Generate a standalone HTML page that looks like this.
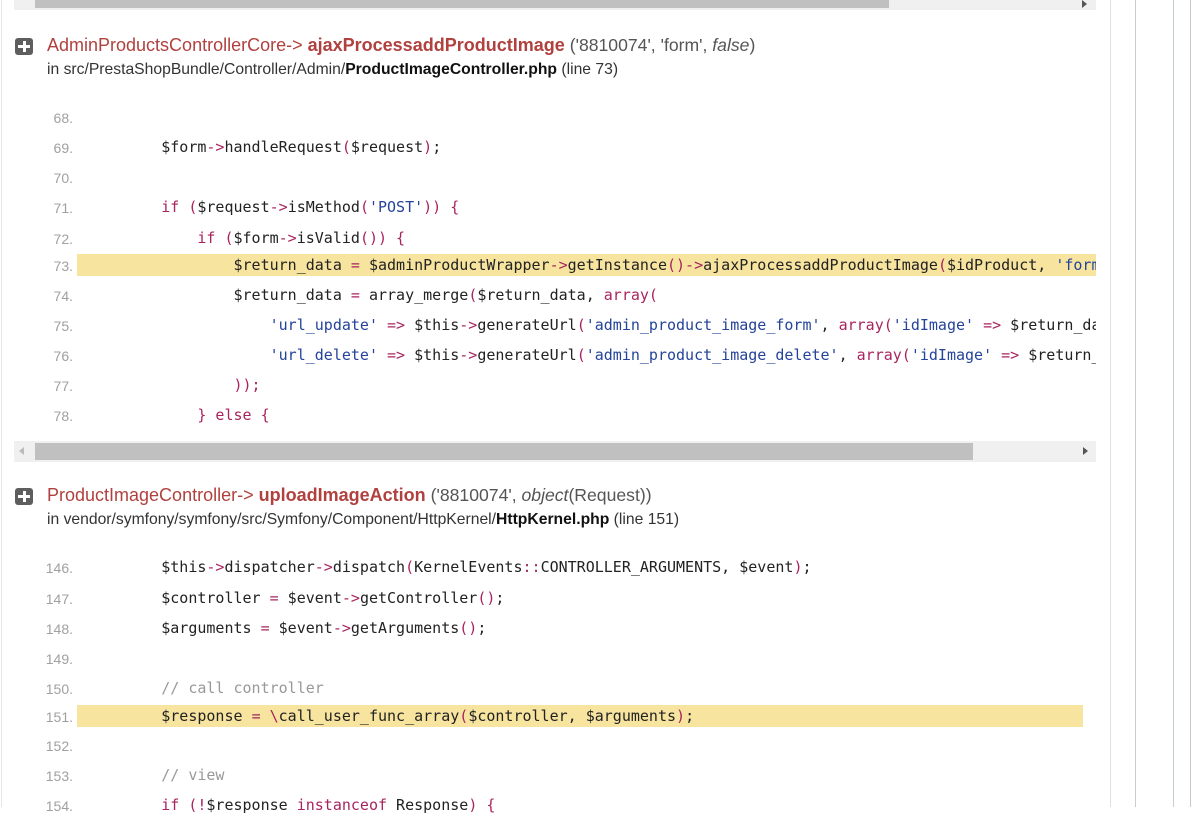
<!DOCTYPE html>
<html><head><meta charset="utf-8"><style>
body{margin:0;width:1202px;height:807px;overflow:hidden;background:#fff;position:relative;font-family:"Liberation Sans",Arial,sans-serif}
.a{position:absolute}
.ln{position:absolute;left:0;width:73px;text-align:right;font:14px "Liberation Sans",sans-serif;color:#a0a0a0;height:22px;line-height:24px}
.cd{position:absolute;left:77px;width:1019px;padding-left:12px;box-sizing:border-box;font:15px "DejaVu Sans Mono",monospace;color:#222;white-space:pre;height:22px;line-height:23px;overflow:hidden}
.hl{background:#f7e49f}
.k{color:#a8245f}.s{color:#24439a}.c{color:#999}
.t{position:absolute;left:47px;font-size:18px;color:#b0413e;white-space:nowrap}
.t b{font-weight:bold}
.t .g{color:#555;font-size:17.6px}
.p{position:absolute;left:47px;font-size:15.7px;color:#333;white-space:nowrap}
.ic{position:absolute;left:15px;width:18px;height:17px;background:#5e5e5e;border-radius:3px}
.ic:before{content:"";position:absolute;left:3px;top:7px;width:12px;height:3px;background:#fff}
.ic:after{content:"";position:absolute;left:7.5px;top:3px;width:3px;height:11px;background:#fff}
</style></head><body>
<div class="a" style="left:1px;top:0;width:1px;height:807px;background:#e6e6e6"></div>
<div class="a" style="left:1110px;top:0;width:1px;height:807px;background:#e0e0e0"></div>
<div class="a" style="left:1135px;top:0;width:1px;height:807px;background:#c5ced2"></div>
<div class="a" style="left:1173px;top:0;width:1px;height:807px;background:#c5ced2"></div>
<div class="a" style="left:1190px;top:0;width:1px;height:807px;background:#c8c8c8"></div>

<div class="a" style="left:14px;top:0;width:1082px;height:10px;background:#f0f0f0"></div>
<div class="a" style="left:35px;top:0;width:854px;height:8px;background:#c0c0c0"></div>
<div class="a" style="left:1082px;top:0;width:0;height:0;border-left:5px solid #555;border-top:4px solid transparent;border-bottom:4px solid transparent"></div>

<div class="ic" style="top:38px"></div>
<div class="t" style="top:35px">AdminProductsControllerCore-&gt; <b>ajaxProcessaddProductImage</b> <span class="g">('8810074', 'form', <i>false</i>)</span></div>
<div class="p" style="top:61px">in src/PrestaShopBundle/Controller/Admin/<b style="color:#111">ProductImageController.php</b> (line 73)</div>

<div class="ln" style="top:106px">68.</div><div class="cd" style="top:106px"></div>
<div class="ln" style="top:136px">69.</div><div class="cd" style="top:136px">        $form<span class="k">-&gt;</span>handleRequest<span class="k">(</span>$request<span class="k">)</span>;</div>
<div class="ln" style="top:166px">70.</div><div class="cd" style="top:166px"></div>
<div class="ln" style="top:196px">71.</div><div class="cd" style="top:196px">        <span class="k">if (</span>$request<span class="k">-&gt;</span>isMethod<span class="k">(</span><span class="s">'POST'</span><span class="k">)) {</span></div>
<div class="ln" style="top:227px">72.</div><div class="cd" style="top:227px">            <span class="k">if (</span>$form<span class="k">-&gt;</span>isValid<span class="k">()) {</span></div>
<div class="ln" style="top:254px">73.</div><div class="cd hl" style="top:254px">                $return_data <span class="k">=</span> $adminProductWrapper<span class="k">-&gt;</span>getInstance<span class="k">()-&gt;</span>ajaxProcessaddProductImage<span class="k">(</span>$idProduct, <span class="s">'form'</span></div>
<div class="ln" style="top:284px">74.</div><div class="cd" style="top:284px">                $return_data <span class="k">=</span> array_merge<span class="k">(</span>$return_data, <span class="k">array(</span></div>
<div class="ln" style="top:314px">75.</div><div class="cd" style="top:314px">                    <span class="s">'url_update'</span> <span class="k">=&gt;</span> $this<span class="k">-&gt;</span>generateUrl<span class="k">(</span><span class="s">'admin_product_image_form'</span>, <span class="k">array(</span><span class="s">'idImage'</span> <span class="k">=&gt;</span> $return_data</div>
<div class="ln" style="top:344px">76.</div><div class="cd" style="top:344px">                    <span class="s">'url_delete'</span> <span class="k">=&gt;</span> $this<span class="k">-&gt;</span>generateUrl<span class="k">(</span><span class="s">'admin_product_image_delete'</span>, <span class="k">array(</span><span class="s">'idImage'</span> <span class="k">=&gt;</span> $return_data</div>
<div class="ln" style="top:374px">77.</div><div class="cd" style="top:374px">                <span class="k">));</span></div>
<div class="ln" style="top:404px">78.</div><div class="cd" style="top:404px">            <span class="k">} else {</span></div>

<div class="a" style="left:14px;top:441px;width:1082px;height:21px;background:#f0f0f0"></div>
<div class="a" style="left:35px;top:443px;width:938px;height:17px;background:#c0c0c0"></div>
<div class="a" style="left:19px;top:447px;width:0;height:0;border-right:5px solid #bbb;border-top:4px solid transparent;border-bottom:4px solid transparent"></div>
<div class="a" style="left:1083px;top:447px;width:0;height:0;border-left:5px solid #555;border-top:4px solid transparent;border-bottom:4px solid transparent"></div>

<div class="ic" style="top:488px"></div>
<div class="t" style="top:485px">ProductImageController-&gt; <b>uploadImageAction</b> <span class="g">('8810074', <i>object</i>(Request))</span></div>
<div class="p" style="top:511px">in vendor/symfony/symfony/src/Symfony/Component/HttpKernel/<b style="color:#111">HttpKernel.php</b> (line 151)</div>

<div class="ln" style="top:556px">146.</div><div class="cd" style="top:556px">        $this<span class="k">-&gt;</span>dispatcher<span class="k">-&gt;</span>dispatch<span class="k">(</span>KernelEvents<span class="k">::</span>CONTROLLER_ARGUMENTS, $event<span class="k">)</span>;</div>
<div class="ln" style="top:587px">147.</div><div class="cd" style="top:587px">        $controller <span class="k">=</span> $event<span class="k">-&gt;</span>getController<span class="k">()</span>;</div>
<div class="ln" style="top:617px">148.</div><div class="cd" style="top:617px">        $arguments <span class="k">=</span> $event<span class="k">-&gt;</span>getArguments<span class="k">()</span>;</div>
<div class="ln" style="top:647px">149.</div><div class="cd" style="top:647px"></div>
<div class="ln" style="top:677px">150.</div><div class="cd" style="top:677px"><span class="c">        // call controller</span></div>
<div class="ln" style="top:705px">151.</div><div class="cd hl" style="top:705px;width:1006px">        $response <span class="k">= \</span>call_user_func_array<span class="k">(</span>$controller, $arguments<span class="k">)</span>;</div>
<div class="ln" style="top:734px">152.</div><div class="cd" style="top:734px"></div>
<div class="ln" style="top:764px">153.</div><div class="cd" style="top:764px"><span class="c">        // view</span></div>
<div class="ln" style="top:794px">154.</div><div class="cd" style="top:794px">        <span class="k">if (!</span>$response <span class="k">instanceof</span> Response<span class="k">) {</span></div>
</body></html>
